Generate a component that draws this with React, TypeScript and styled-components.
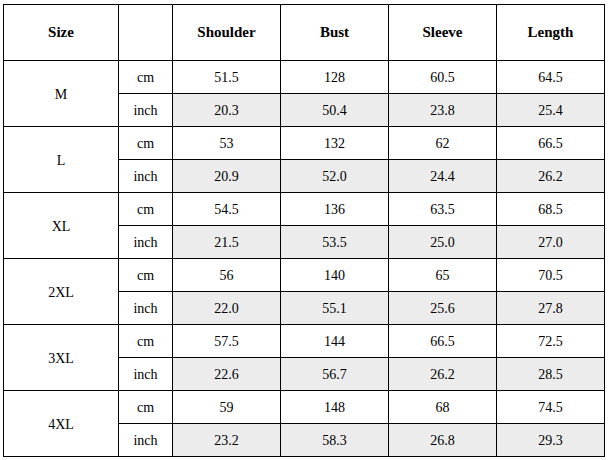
import { createGlobalStyle } from 'styled-components';
import styled from 'styled-components';

const GlobalStyle = createGlobalStyle`
  html, body {
    margin: 0;
    padding: 0;
    background: #ffffff;
  }
`;

const ScPage = styled.div`
  padding: 4px 0 0 3px;
  font-family: "Liberation Serif", "Times New Roman", serif;
  color: #000;
`;

const ScTable = styled.table`
  border-collapse: collapse;
  table-layout: fixed;
  width: 602px;
  font-size: 14px;
`;

const ScCol = styled.col<{ $w: number }>`
  width: ${p => p.$w}px;
`;

const ScHeadCell = styled.th`
  height: 55px;
  padding: 0;
  border: 1px solid #000;
  font-size: 15px;
  font-weight: bold;
  text-align: center;
  vertical-align: middle;
`;

const ScCell = styled.td<{ $shaded?: boolean }>`
  height: 30px;
  padding: 2px 0 0;
  border: 1px solid #000;
  text-align: center;
  vertical-align: middle;
  background-color: ${p => (p.$shaded ? '#ececec' : '#ffffff')};
`;

type SizeRow = {
  size: string,
  cm: string[],
  inch: string[]
};

const widths = [115, 54, 108, 108, 108, 108];
const columns = ['Shoulder', 'Bust', 'Sleeve', 'Length'];

const rows: SizeRow[] = [
  { size: 'M', cm: ['51.5', '128', '60.5', '64.5'], inch: ['20.3', '50.4', '23.8', '25.4'] },
  { size: 'L', cm: ['53', '132', '62', '66.5'], inch: ['20.9', '52.0', '24.4', '26.2'] },
  { size: 'XL', cm: ['54.5', '136', '63.5', '68.5'], inch: ['21.5', '53.5', '25.0', '27.0'] },
  { size: '2XL', cm: ['56', '140', '65', '70.5'], inch: ['22.0', '55.1', '25.6', '27.8'] },
  { size: '3XL', cm: ['57.5', '144', '66.5', '72.5'], inch: ['22.6', '56.7', '26.2', '28.5'] },
  { size: '4XL', cm: ['59', '148', '68', '74.5'], inch: ['23.2', '58.3', '26.8', '29.3'] },
];

function App() {
  return (
    <ScPage>
      <GlobalStyle />
      <ScTable>
        <colgroup>
          {widths.map((w, i) => <ScCol key={i} $w={w} />)}
        </colgroup>
        <thead>
          <tr>
            <ScHeadCell>{'Size'}</ScHeadCell>
            <ScHeadCell />
            {columns.map(c => <ScHeadCell key={c}>{c}</ScHeadCell>)}
          </tr>
        </thead>
        <tbody>
          {rows.map(r => [
            <tr key={r.size + '-cm'}>
              <ScCell rowSpan={2}>{r.size}</ScCell>
              <ScCell>{'cm'}</ScCell>
              {r.cm.map((v, i) => <ScCell key={i}>{v}</ScCell>)}
            </tr>,
            <tr key={r.size + '-inch'}>
              <ScCell>{'inch'}</ScCell>
              {r.inch.map((v, i) => <ScCell key={i} $shaded>{v}</ScCell>)}
            </tr>
          ])}
        </tbody>
      </ScTable>
    </ScPage>
  );
}

export default App;
